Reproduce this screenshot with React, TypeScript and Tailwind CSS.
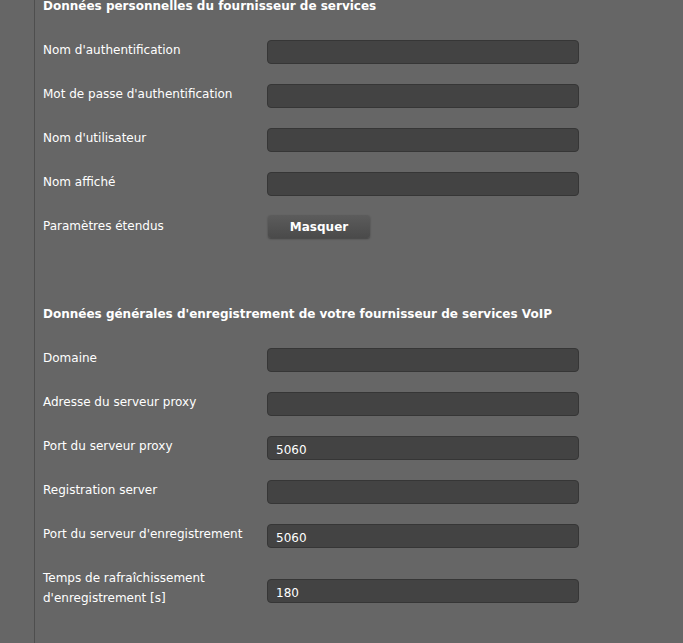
import React from "react";

const font = { fontFamily: '"DejaVu Sans", Verdana, sans-serif' };

function Field({ label, value }: { label: string; value?: string }) {
  return (
    <div className="flex h-[44px] items-start">
      <div className="w-[224px] pt-[1px] text-[12px] leading-[20px] text-white">{label}</div>
      <div className="mt-[1px] flex h-[24px] w-[312px] items-center rounded-[4px] border border-[#363636] bg-[#434343] pl-[8px] pt-[3px] text-[12px] text-white">
        {value}
      </div>
    </div>
  );
}

export default function App() {
  return (
    <div className="flex h-[643px] w-[683px] overflow-hidden bg-[#666666]" style={font}>
      <div className="w-[35px] shrink-0 border-r border-[#4e4e4e]" />
      <div className="flex flex-col pl-[8px]">
        <div className="mt-[-4px] text-[12px] font-bold leading-[20px] text-white">
          Données personnelles du fournisseur de services
        </div>
        <div className="mt-[23px] flex flex-col">
          <Field label="Nom d'authentification" />
          <Field label="Mot de passe d'authentification" />
          <Field label="Nom d'utilisateur" />
          <Field label="Nom affiché" />
          <div className="flex h-[44px] items-start">
            <div className="w-[225px] pt-[1px] text-[12px] leading-[20px] text-white">Paramètres étendus</div>
            <button className="h-[23px] w-[102px] rounded-[3px] bg-gradient-to-b from-[#5c5c5c] to-[#4a4a4a] text-[12px] font-bold text-white shadow-[0_1px_2px_rgba(0,0,0,0.35)]">
              Masquer
            </button>
          </div>
        </div>
        <div className="mt-[44px] pt-[1px] text-[12px] font-bold leading-[20px] text-white">
          Données générales d'enregistrement de votre fournisseur de services VoIP
        </div>
        <div className="mt-[23px] flex flex-col">
          <Field label="Domaine" />
          <Field label="Adresse du serveur proxy" />
          <Field label="Port du serveur proxy" value="5060" />
          <Field label="Registration server" />
          <Field label="Port du serveur d'enregistrement" value="5060" />
          <div className="flex items-start">
            <div className="w-[224px] pt-[1px] text-[12px] leading-[20px] text-white">
              Temps de rafraîchissement
              <br />
              d'enregistrement [s]
            </div>
            <div className="mt-[12px] flex h-[24px] w-[312px] items-center rounded-[4px] border border-[#363636] bg-[#434343] pl-[8px] pt-[3px] text-[12px] text-white">
              180
            </div>
          </div>
        </div>
      </div>
    </div>
  );
}
